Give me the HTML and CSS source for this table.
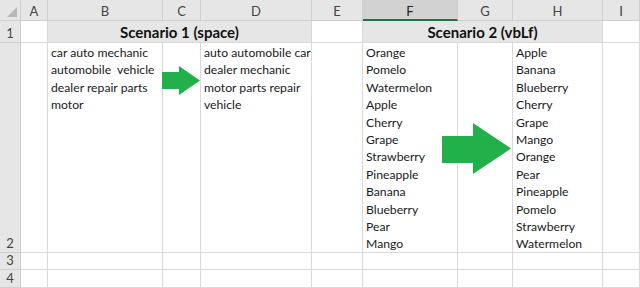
FILE: index.html
```html
<!DOCTYPE html>
<html lang="en">
<head>
  <meta charset="UTF-8" />
  <title>Sort words in cell</title>
  <link rel="stylesheet" href="styles.css">
</head>
<body>
  <div class="sheet">
    <!-- column headers -->
    <div class="corner"><span class="tri"></span></div>
    <div class="colhead">A</div>
    <div class="colhead">B</div>
    <div class="colhead">C</div>
    <div class="colhead">D</div>
    <div class="colhead">E</div>
    <div class="colhead selected">F</div>
    <div class="colhead">G</div>
    <div class="colhead">H</div>
    <div class="colhead">I</div>

    <!-- row 1 -->
    <div class="rowhead">1</div>
    <div class="cell"></div>
    <div class="cell title span3">Scenario 1 (space)</div>
    <div class="cell"></div>
    <div class="cell title span3">Scenario 2 (vbLf)</div>
    <div class="cell"></div>

    <!-- row 2 -->
    <div class="rowhead">2</div>
    <div class="cell"></div>
    <div class="cell text">car auto mechanic<br>automobile&nbsp; vehicle<br>dealer repair parts<br>motor</div>
    <div class="cell"></div>
    <div class="cell text">auto automobile car<br>dealer mechanic<br>motor parts repair<br>vehicle</div>
    <div class="cell"></div>
    <div class="cell text">Orange<br>Pomelo<br>Watermelon<br>Apple<br>Cherry<br>Grape<br>Strawberry<br>Pineapple<br>Banana<br>Blueberry<br>Pear<br>Mango</div>
    <div class="cell"></div>
    <div class="cell text">Apple<br>Banana<br>Blueberry<br>Cherry<br>Grape<br>Mango<br>Orange<br>Pear<br>Pineapple<br>Pomelo<br>Strawberry<br>Watermelon</div>
    <div class="cell"></div>

    <!-- row 3 -->
    <div class="rowhead">3</div>
    <div class="cell"></div><div class="cell"></div><div class="cell"></div>
    <div class="cell"></div><div class="cell"></div><div class="cell"></div>
    <div class="cell"></div><div class="cell"></div><div class="cell"></div>

    <!-- row 4 -->
    <div class="rowhead">4</div>
    <div class="cell"></div><div class="cell"></div><div class="cell"></div>
    <div class="cell"></div><div class="cell"></div><div class="cell"></div>
    <div class="cell"></div><div class="cell"></div><div class="cell"></div>

    <!-- floating arrow shapes -->
    <svg class="arrow arrow-small" width="38" height="29" viewBox="0 0 38 29">
      <polygon points="0,6 17,6 17,0 38,14.5 17,29 17,23 0,23" />
    </svg>
    <svg class="arrow arrow-big" width="69" height="51" viewBox="0 0 69 51">
      <polygon points="0,13 31,13 31,0 69,25.5 31,51 31,40 0,40" />
    </svg>
  </div>
</body>
</html>
```

FILE: styles.css
```css
body {
  margin: 0;
  background: #fff;
}

.sheet {
  position: relative;
  display: grid;
  grid-template-columns: 21px 27px 115px 38px 111px 51px 95px 55px 90px 37px;
  grid-template-rows: 21px 22px 210px 17px 18px;
  width: 640px;
  height: 288px;
  overflow: hidden;
  font-family: Lato, "Liberation Sans", sans-serif;
  font-size: 12.2px;
  color: #1a1a22;
}

.corner,
.colhead,
.rowhead {
  background: #e6e6e6;
  border-right: 1px solid #cfcfcf;
  border-bottom: 1px solid #cfcfcf;
  box-sizing: border-box;
  color: #444;
  font-size: 13px;
}

.corner {
  position: relative;
}

.corner .tri {
  position: absolute;
  right: 3px;
  bottom: 3px;
  width: 0;
  height: 0;
  border-left: 10px solid transparent;
  border-bottom: 10px solid #b9b9b9;
}

.colhead {
  display: flex;
  align-items: center;
  justify-content: center;
  padding-top: 2px;
}

.colhead.selected {
  background: #d2d2d2;
  border-bottom: 2px solid #217346;
  color: #222;
}

.rowhead {
  display: flex;
  align-items: flex-end;
  justify-content: center;
  line-height: 17px;
}

.cell {
  border-right: 1px solid #d9d9d9;
  border-bottom: 1px solid #d9d9d9;
  box-sizing: border-box;
}

.span3 {
  grid-column: span 3;
}

.title {
  display: flex;
  align-items: center;
  justify-content: center;
  background: #e7e6e6;
  font-size: 15px;
  font-weight: bold;
  color: #111;
  padding-top: 1px;
}

.text {
  padding: 1px 0 0 3px;
  line-height: 17.4px;
  white-space: nowrap;
  overflow: hidden;
}

.arrow {
  position: absolute;
  fill: #22b04b;
}

.arrow-small {
  left: 162px;
  top: 66px;
}

.arrow-big {
  left: 442px;
  top: 123px;
}
```
